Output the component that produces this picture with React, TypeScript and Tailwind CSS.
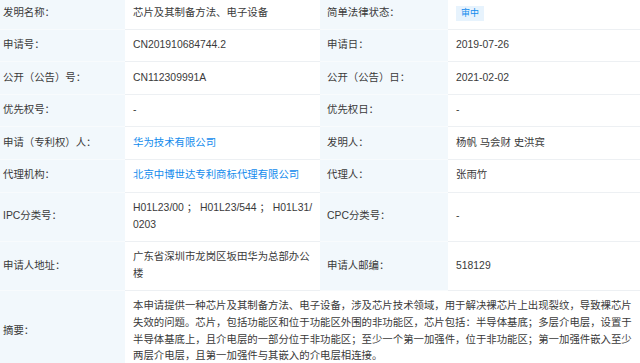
import type { ReactNode } from 'react';

type Cell = {
  label: string;
  value: ReactNode;
};

const rows: [Cell, Cell][] = [
  [
    { label: '发明名称：', value: '芯片及其制备方法、电子设备' },
    {
      label: '简单法律状态：',
      value: (
        <span className="inline-flex h-[15px] items-center bg-[#e7f3fd] px-[5px] text-[9px] leading-none text-[#128bed]">
          审中
        </span>
      ),
    },
  ],
  [
    { label: '申请号：', value: 'CN201910684744.2' },
    { label: '申请日：', value: '2019-07-26' },
  ],
  [
    { label: '公开（公告）号：', value: 'CN112309991A' },
    { label: '公开（公告）日：', value: '2021-02-02' },
  ],
  [
    { label: '优先权号：', value: '-' },
    { label: '优先权日：', value: '-' },
  ],
  [
    {
      label: '申请（专利权）人：',
      value: <span className="text-[#128bed]">华为技术有限公司</span>,
    },
    { label: '发明人：', value: '杨帆 马会财 史洪宾' },
  ],
  [
    {
      label: '代理机构：',
      value: <span className="text-[#128bed]">北京中博世达专利商标代理有限公司</span>,
    },
    { label: '代理人：', value: '张雨竹' },
  ],
  [
    {
      label: 'IPC分类号：',
      value: (
        <span className="whitespace-nowrap">
          H01L23/00 ； H01L23/544 ； H01L31/
          <br />
          0203
        </span>
      ),
    },
    { label: 'CPC分类号：', value: '-' },
  ],
  [
    { label: '申请人地址：', value: '广东省深圳市龙岗区坂田华为总部办公楼' },
    { label: '申请人邮编：', value: '518129' },
  ],
];

const summary =
  '本申请提供一种芯片及其制备方法、电子设备，涉及芯片技术领域，用于解决裸芯片上出现裂纹，导致裸芯片失效的问题。芯片，包括功能区和位于功能区外围的非功能区，芯片包括：半导体基底；多层介电层，设置于半导体基底上，且介电层的一部分位于非功能区；至少一个第一加强件，位于非功能区；第一加强件嵌入至少两层介电层，且第一加强件与其嵌入的介电层相连接。';

function Label({ children }: { children: ReactNode }) {
  return (
    <div className="flex items-center border-b border-[#f8fbfd] bg-[#f2f8fc] py-[7.5px] pl-[7px] pr-2">
      {children}
    </div>
  );
}

function Value({ children }: { children: ReactNode }) {
  return (
    <div className="flex items-center border-b border-[#edf0f3] px-2 py-[7.5px]">
      <div>{children}</div>
    </div>
  );
}

export default function App() {
  return (
    <div className="h-[363px] w-[640px] overflow-hidden bg-white">
      <div className="-ml-[4px] -mt-[3px] w-[648px] font-['Liberation_Sans','Noto_Sans_CJK_SC',sans-serif] text-[10.4px] leading-[16.6px] text-[#3a3a3a]">
        {rows.map(([left, right], i) => (
          <div key={i} className="grid grid-cols-[129px_195px_128px_196px]">
            <Label>{left.label}</Label>
            <Value>{left.value}</Value>
            <Label>{right.label}</Label>
            <Value>{right.value}</Value>
          </div>
        ))}
        <div className="grid grid-cols-[129px_519px]">
          <Label>摘要：</Label>
          <Value>{summary}</Value>
        </div>
      </div>
    </div>
  );
}
